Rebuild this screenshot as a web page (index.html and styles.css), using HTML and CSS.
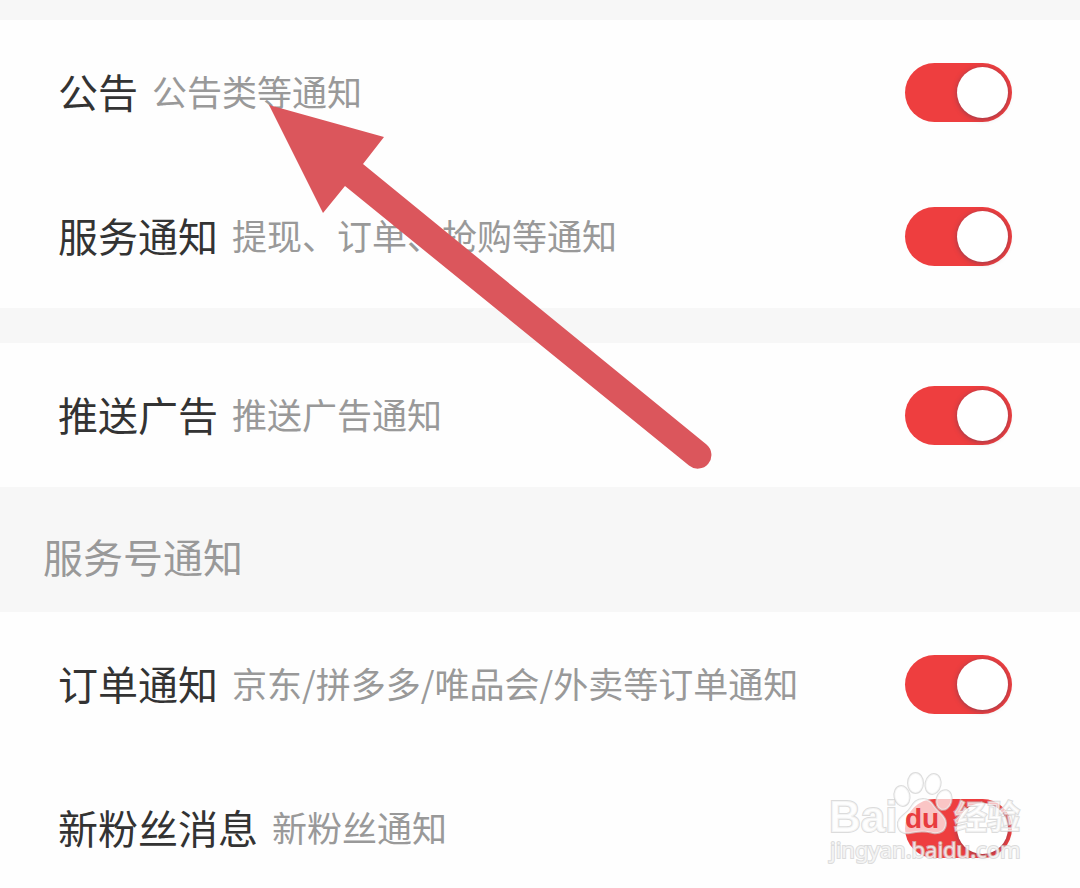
FILE: index.html
```html
<!DOCTYPE html>
<html lang="zh-CN">
<head>
    <meta charset="UTF-8">
    <meta name="viewport" content="width=device-width, initial-scale=1.0">
    <title>通知设置</title>
    <link rel="stylesheet" href="styles.css">
</head>
<body>
    <main class="settings">
        <section class="group">
            <label class="row">
                <span class="name">公告</span>
                <span class="desc">公告类等通知</span>
                <input class="switch" type="checkbox" checked>
            </label>
            <label class="row">
                <span class="name">服务通知</span>
                <span class="desc">提现、订单、抢购等通知</span>
                <input class="switch" type="checkbox" checked>
            </label>
        </section>

        <section class="group">
            <label class="row">
                <span class="name">推送广告</span>
                <span class="desc">推送广告通知</span>
                <input class="switch" type="checkbox" checked>
            </label>
        </section>

        <h2 class="group-title">服务号通知</h2>
        <section class="group">
            <label class="row">
                <span class="name">订单通知</span>
                <span class="desc">京东/拼多多/唯品会/外卖等订单通知</span>
                <input class="switch" type="checkbox" checked>
            </label>
            <label class="row">
                <span class="name">新粉丝消息</span>
                <span class="desc">新粉丝通知</span>
                <input class="switch" type="checkbox" checked>
            </label>
        </section>

        <!-- 箭头标注 -->
        <svg class="arrow" width="444" height="366" viewBox="0 0 444 366" aria-hidden="true">
            <path d="M1 1L116 33L95 60L438.500 340.500A13.500 13.500 0 0 1 421 361.500L77 82L55 109Z"/>
        </svg>

        <!-- 水印 -->
        <svg class="watermark" width="200" height="100" viewBox="0 0 200 100">
            <g class="mark">
                <text class="mark-bai" x="3" y="64">Bai</text>
                <ellipse cx="76" cy="28" rx="7.500" ry="10" transform="rotate(-12 76 28)"/>
                <ellipse cx="89.500" cy="15" rx="7.500" ry="10"/>
                <ellipse cx="107" cy="16" rx="7.500" ry="10" transform="rotate(12 107 16)"/>
                <ellipse cx="118" cy="32" rx="7.500" ry="10" transform="rotate(15 118 32)"/>
                <path d="M97 31C87 31 86 40 81 44C75 49 71 52 72 58C73 64 78 66 84 65C92 63 100 63 107 65C114 66 120 63 120 55C120 48 113 45 108 38C105 33 102 31 97 31Z"/>
                <text class="mark-jy" x="128" y="61">经验</text>
                <text class="mark-url" x="4" y="90">jingyan.baidu.com</text>
            </g>
            <text class="mark-du" x="79" y="60">du</text>
        </svg>
    </main>
</body>
</html>
```
FILE: styles.css
```css
* {
    box-sizing: border-box;
}

body {
    margin: 0;
    background-color: #f7f7f7;
    font-family: "Noto Sans CJK SC", sans-serif;
}

.settings {
    position: relative;
    height: 100vh;
    padding-top: 20px;
    overflow: hidden;
}

.group {
    background-color: #fefefe;
}

.group + .group {
    margin-top: 35px;
}

.row {
    display: flex;
    align-items: center;
    height: 144px;
    padding: 0 68px 0 58px;
}

.name {
    margin-right: 14px;
    padding-bottom: 2px;
    font-size: 40px;
    color: #333;
}

.desc {
    padding-bottom: 4px;
    font-size: 35px;
    color: #999;
}

.group-title {
    display: flex;
    align-items: center;
    height: 125px;
    margin: 0;
    padding: 12px 43px 0;
    font-size: 40px;
    font-weight: normal;
    color: #999;
}

/* 开关 */
.switch {
    appearance: none;
    flex: none;
    width: 107px;
    height: 59px;
    margin: 0 0 0 auto;
    padding: 4px;
    border-radius: 30px;
    background-color: #ccc;
    cursor: pointer;
}

.switch::before {
    content: "";
    display: block;
    width: 51px;
    height: 51px;
    border-radius: 50%;
    background-color: #fff;
    box-shadow: 0 1px 5px rgba(60, 60, 90, 0.5);
}

.switch:checked {
    background-color: #ee3e3f;
}

.switch:checked::before {
    margin-left: auto;
}

/* 浮在列表上面的箭头和水印 */
.arrow {
    position: absolute;
    top: 104px;
    left: 268px;
    fill: #db565c;
    pointer-events: none;
}

.watermark {
    position: absolute;
    top: 768px;
    right: 54px;
    overflow: visible;
    pointer-events: none;
}

.mark {
    fill: rgba(255, 255, 255, 0.7);
    stroke: rgba(205, 205, 205, 0.7);
    stroke-width: 2px;
    paint-order: stroke;
}

.mark-bai {
    font: bold 44px "Liberation Sans", sans-serif;
}

.mark-du {
    font: bold 28px "Liberation Sans", sans-serif;
    fill: #e83c3e;
}

.mark-jy {
    font: bold 33px "Noto Sans CJK SC", sans-serif;
}

.mark-url {
    font: 22px "Noto Sans", sans-serif;
}
```
